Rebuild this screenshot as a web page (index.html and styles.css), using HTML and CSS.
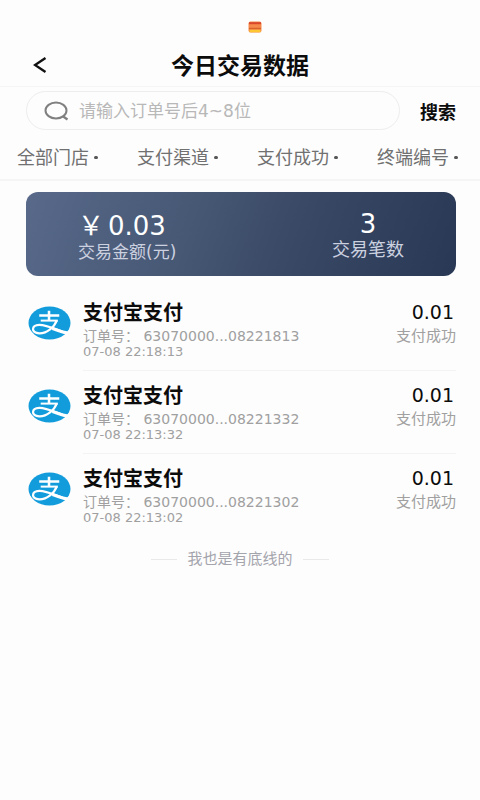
FILE: index.html
```
<!DOCTYPE html>
<html lang="zh-CN">
<head>
<meta charset="utf-8">
<meta name="viewport" content="width=device-width, initial-scale=1">
<title>今日交易数据</title>
<link rel="stylesheet" href="styles.css">
</head>
<body>
<svg class="defs" aria-hidden="true">
  <symbol id="alipay" viewBox="0 0 44 34" preserveAspectRatio="none">
    <ellipse cx="22" cy="17" rx="21.5" ry="16.5" fill="#129cdc"/>
    <g fill="none" stroke="#fff">
      <path d="M11.500 9.500H32M21.500 4.800V14.500" stroke-width="2.600"/>
      <path d="M13 14.600H30.500" stroke-width="2"/>
      <path d="M29.500 14.400C27 21 19.500 27.600 11.500 27.400C2.500 27 3.500 19 11.500 18.800C20 18.600 30 24.500 41 27.600" stroke-width="2.300"/>
      <path d="M25 22.500C31 24.500 35 26.200 41 27.200" stroke-width="3.200"/>
    </g>
  </symbol>
</svg>
<div class="status">
  <svg class="status-icon" viewBox="0 0 14 12" aria-hidden="true">
    <rect x="0.500" y="0.500" width="13" height="11" rx="2" fill="#f58a4c"/>
    <path d="M1 2.200H13" stroke="#d9462c" stroke-width="2"/>
    <path d="M1 7.500H13" stroke="#d8612c" stroke-width="1.500"/>
    <path d="M1.500 10H12.500" stroke="#fcc733" stroke-width="2.500"/>
  </svg>
</div>
<header class="header">
  <button class="back" type="button" aria-label="返回">
    <svg viewBox="0 0 14 16" aria-hidden="true"><path d="M12.500 1L2 8L12.500 15" fill="none" stroke="#111" stroke-width="2.400"/></svg>
  </button>
  <h1>今日交易数据</h1>
</header>
<main>
  <form class="search">
    <label class="search-box">
      <svg viewBox="0 0 26 20" aria-hidden="true"><ellipse cx="12" cy="9.500" rx="10.500" ry="8" fill="none" stroke="#808080" stroke-width="2"/><path d="M18.500 15L23.500 18.500" stroke="#808080" stroke-width="2.200"/></svg>
      <input type="text" aria-label="订单号" placeholder="请输入订单号后4~8位">
    </label>
    <button type="button">搜索</button>
  </form>
  <div class="filters">
    <label><select aria-label="门店"><option>全部门店</option></select></label>
    <label><select aria-label="渠道"><option>支付渠道</option></select></label>
    <label><select aria-label="状态"><option>支付成功</option></select></label>
    <label><select aria-label="终端"><option>终端编号</option></select></label>
  </div>
  <section class="summary">
    <div class="total"><strong><span class="yen">￥</span>0.03</strong><span class="caption">交易金额(元)</span></div>
    <div class="count"><strong>3</strong><span class="caption">交易笔数</span></div>
  </section>
  <ul class="orders">
    <li>
      <svg class="logo" aria-hidden="true"><use href="#alipay"/></svg>
      <div class="order">
        <div class="info"><h2>支付宝支付</h2><p>订单号： 63070000...08221813</p><time>07-08 22:18:13</time></div>
        <div class="result"><b>0.01</b><span>支付成功</span></div>
      </div>
    </li>
    <li>
      <svg class="logo" aria-hidden="true"><use href="#alipay"/></svg>
      <div class="order">
        <div class="info"><h2>支付宝支付</h2><p>订单号： 63070000...08221332</p><time>07-08 22:13:32</time></div>
        <div class="result"><b>0.01</b><span>支付成功</span></div>
      </div>
    </li>
    <li>
      <svg class="logo" aria-hidden="true"><use href="#alipay"/></svg>
      <div class="order">
        <div class="info"><h2>支付宝支付</h2><p>订单号： 63070000...08221302</p><time>07-08 22:13:02</time></div>
        <div class="result"><b>0.01</b><span>支付成功</span></div>
      </div>
    </li>
  </ul>
  <p class="end">我也是有底线的</p>
</main>
</body>
</html>
```
FILE: styles.css
```
* {
  box-sizing: border-box;
  margin: 0;
  padding: 0;
}

body {
  background: #fdfdfd;
  color: #0c0c0c;
  font-family: "DejaVu Sans", "Noto Sans CJK SC", sans-serif;
  font-size: 13px;
}

button,
input,
select {
  border: 0;
  background: none;
  color: inherit;
  font: inherit;
}

.defs {
  display: none;
}

.status {
  display: flex;
  justify-content: center;
  height: 44px;
  padding: 21px 0 0 30px;
}

.status-icon {
  width: 14px;
  height: 12px;
}

.header {
  display: grid;
  grid-template-columns: 80px 1fr 80px;
  align-items: center;
  height: 43px;
  border-bottom: 1px solid #f5f5f5;
}

.back {
  display: flex;
  padding-left: 33px;
}

.back svg {
  width: 14px;
  height: 16px;
}

h1 {
  font-family: "Noto Sans CJK SC", sans-serif;
  font-size: 23px;
  font-weight: 700;
  line-height: 32px;
  padding-bottom: 2px;
  text-align: center;
}

.search {
  display: flex;
  align-items: center;
  justify-content: space-between;
  gap: 20px;
  padding: 4px 24px 0 26px;
}

.search-box {
  display: flex;
  flex: 1;
  align-items: center;
  gap: 9px;
  height: 39px;
  padding: 0 17px;
  border: 1px solid #ededed;
  border-radius: 20px;
}

.search-box svg {
  flex: none;
  width: 26px;
  height: 20px;
}

.search-box input {
  flex: 1;
  min-width: 0;
  font-size: 17px;
  outline: 0;
}

.search-box input::placeholder {
  color: #b8b8b8;
}

.search button {
  font-family: "Noto Sans CJK SC", sans-serif;
  font-size: 18px;
  font-weight: 700;
}

.filters {
  display: grid;
  grid-template-columns: repeat(4, 1fr);
  height: 51px;
  padding-top: 5px;
  border-bottom: 2px solid #f5f5f5;
  color: #707070;
  font-size: 18px;
}

.filters label {
  display: flex;
  align-items: center;
  gap: 5px;
  padding-left: 17px;
}

.filters label::after {
  width: 4px;
  height: 3px;
  border-radius: 2px;
  background: #555;
  content: "";
}

.filters select {
  appearance: none;
}

.summary {
  display: flex;
  align-items: flex-start;
  justify-content: space-between;
  height: 84px;
  margin: 11px 24px 0 26px;
  padding: 0 52px;
  border-radius: 12px;
  background: linear-gradient(110deg, #58698a 0%, #465874 38%, #384763 65%, #293955 100%);
  color: #fff;
}

.summary div {
  display: flex;
  flex-direction: column;
}

.summary strong {
  font-size: 26px;
  font-weight: 400;
  line-height: 28px;
}

.yen {
  margin-right: 4px;
}

.caption {
  color: #ccd1e0;
  font-size: 17px;
  line-height: 24px;
}

.total {
  padding-top: 20px;
}

.count {
  align-items: center;
  padding-top: 18px;
}

.count .caption {
  font-size: 18px;
}

.orders {
  padding: 12px 24px 0 28px;
  list-style: none;
}

.orders li {
  display: flex;
  gap: 12px;
}

.logo {
  flex: none;
  width: 43px;
  height: 34px;
  margin-top: 18px;
}

.order {
  display: flex;
  flex: 1;
  justify-content: space-between;
  height: 83px;
  padding-top: 12px;
  border-bottom: 1px solid #f3f3f3;
}

.orders li:last-child .order {
  border-bottom: 0;
}

.info,
.result {
  display: flex;
  flex-direction: column;
  color: #a0a0a0;
}

.result {
  align-items: flex-end;
}

h2,
.result b {
  color: #0c0c0c;
  line-height: 24px;
}

h2 {
  font-family: "Noto Sans CJK SC", sans-serif;
  font-size: 20px;
  font-weight: 700;
}

.result b {
  padding-right: 2px;
  font-size: 19px;
  font-weight: 400;
}

.info p,
.result span {
  font-size: 14px;
  line-height: 24px;
}

.result span {
  font-size: 15px;
}

.info time {
  line-height: 8px;
}

.end {
  display: flex;
  align-items: center;
  justify-content: center;
  gap: 10px;
  padding-top: 10px;
  color: #a4a4ac;
  font-size: 15px;
  line-height: 24px;
}

.end::before,
.end::after {
  width: 26px;
  height: 1px;
  background: #e9e9e9;
  content: "";
}
```
